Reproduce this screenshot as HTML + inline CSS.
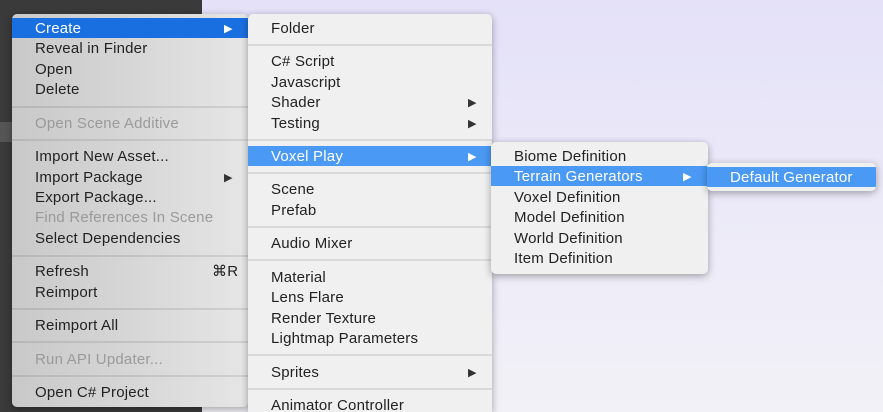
<!DOCTYPE html>
<html style="width:883px;height:412px;overflow:hidden"><head><meta charset="utf-8"><style>
*{margin:0;padding:0;box-sizing:border-box}
body{width:883px;height:412px;overflow:hidden;position:relative;font-family:"Liberation Sans",sans-serif;font-size:15px;letter-spacing:0.2px;color:#222;background:linear-gradient(180deg,#e4e1f9 0%,#eceaf8 50%,#f2f1f7 100%)}
.dark{position:absolute;left:0;top:0;width:202px;height:412px;background:#3a3a3a}
.m{position:absolute;border-radius:5px;box-shadow:0 2px 8px rgba(0,0,0,.35);overflow:hidden}
.i{position:absolute;left:0;right:0;height:20px;line-height:22px;white-space:nowrap}
.d{color:#9a9a9a}
.s{position:absolute;left:0;right:0;height:2px;background:rgba(0,0,0,.09)}
.h{color:#fff}
.a{position:absolute;top:0;font-size:11px}
</style></head><body>
<div class="dark"></div>
<div style="position:absolute;left:0;top:122px;width:12px;height:20px;background:#555"></div>
<div class="m" style="left:12px;top:14px;width:236px;height:393px;background:linear-gradient(90deg,#c9c9c9,#d6d6d6 50%,#e6e6e6)">
<div class="i h" style="top:4px;background:#1a6fe0;padding-left:23px">Create<span class="a" style="left:212px">▶</span></div>
<div class="i" style="top:24px;padding-left:23px">Reveal in Finder</div>
<div class="i" style="top:45px;padding-left:23px">Open</div>
<div class="i" style="top:65px;padding-left:23px">Delete</div>
<div class="s" style="top:92px"></div>
<div class="i d" style="top:99px;padding-left:23px">Open Scene Additive</div>
<div class="s" style="top:125px"></div>
<div class="i" style="top:132px;padding-left:23px">Import New Asset...</div>
<div class="i" style="top:153px;padding-left:23px">Import Package<span class="a" style="left:212px;color:#333">▶</span></div>
<div class="i" style="top:173px;padding-left:23px">Export Package...</div>
<div class="i d" style="top:193px;padding-left:23px">Find References In Scene</div>
<div class="i" style="top:214px;padding-left:23px">Select Dependencies</div>
<div class="s" style="top:241px"></div>
<div class="i" style="top:247px;padding-left:23px">Refresh<span style="position:absolute;left:200px">⌘R</span></div>
<div class="i" style="top:268px;padding-left:23px">Reimport</div>
<div class="s" style="top:294px"></div>
<div class="i" style="top:301px;padding-left:23px">Reimport All</div>
<div class="s" style="top:327px"></div>
<div class="i d" style="top:335px;padding-left:23px">Run API Updater...</div>
<div class="s" style="top:361px"></div>
<div class="i" style="top:368px;padding-left:23px">Open C# Project</div>
</div>
<div class="m" style="left:248px;top:14px;width:244px;height:398px;background:#f0f0f0;border-bottom-left-radius:0;border-bottom-right-radius:0">
<div class="i" style="top:4px;padding-left:23px">Folder</div>
<div class="s" style="top:30px"></div>
<div class="i" style="top:37px;padding-left:23px">C# Script</div>
<div class="i" style="top:58px;padding-left:23px">Javascript</div>
<div class="i" style="top:78px;padding-left:23px">Shader<span class="a" style="left:220px;color:#333">▶</span></div>
<div class="i" style="top:99px;padding-left:23px">Testing<span class="a" style="left:220px;color:#333">▶</span></div>
<div class="s" style="top:125px"></div>
<div class="i h" style="top:132px;background:#4a9af5;padding-left:23px">Voxel Play<span class="a" style="left:220px">▶</span></div>
<div class="s" style="top:158px"></div>
<div class="i" style="top:165px;padding-left:23px">Scene</div>
<div class="i" style="top:186px;padding-left:23px">Prefab</div>
<div class="s" style="top:212px"></div>
<div class="i" style="top:219px;padding-left:23px">Audio Mixer</div>
<div class="s" style="top:245px"></div>
<div class="i" style="top:253px;padding-left:23px">Material</div>
<div class="i" style="top:273px;padding-left:23px">Lens Flare</div>
<div class="i" style="top:294px;padding-left:23px">Render Texture</div>
<div class="i" style="top:314px;padding-left:23px">Lightmap Parameters</div>
<div class="s" style="top:340px"></div>
<div class="i" style="top:348px;padding-left:23px">Sprites<span class="a" style="left:220px;color:#333">▶</span></div>
<div class="s" style="top:374px"></div>
<div class="i" style="top:381px;padding-left:23px">Animator Controller</div>
</div>
<div class="m" style="left:491px;top:142px;width:217px;height:132px;background:#f0f0f0">
<div class="i" style="top:4px;padding-left:23px">Biome Definition</div>
<div class="i h" style="top:24px;background:#4a9af5;padding-left:23px">Terrain Generators<span class="a" style="left:192px">▶</span></div>
<div class="i" style="top:45px;padding-left:23px">Voxel Definition</div>
<div class="i" style="top:65px;padding-left:23px">Model Definition</div>
<div class="i" style="top:86px;padding-left:23px">World Definition</div>
<div class="i" style="top:106px;padding-left:23px">Item Definition</div>
</div>
<div class="m" style="left:707px;top:163px;width:169px;height:28px;background:#f0f0f0">
<div class="i h" style="top:4px;background:#4a9af5;padding-left:23px">Default Generator</div>
</div>
</body></html>
